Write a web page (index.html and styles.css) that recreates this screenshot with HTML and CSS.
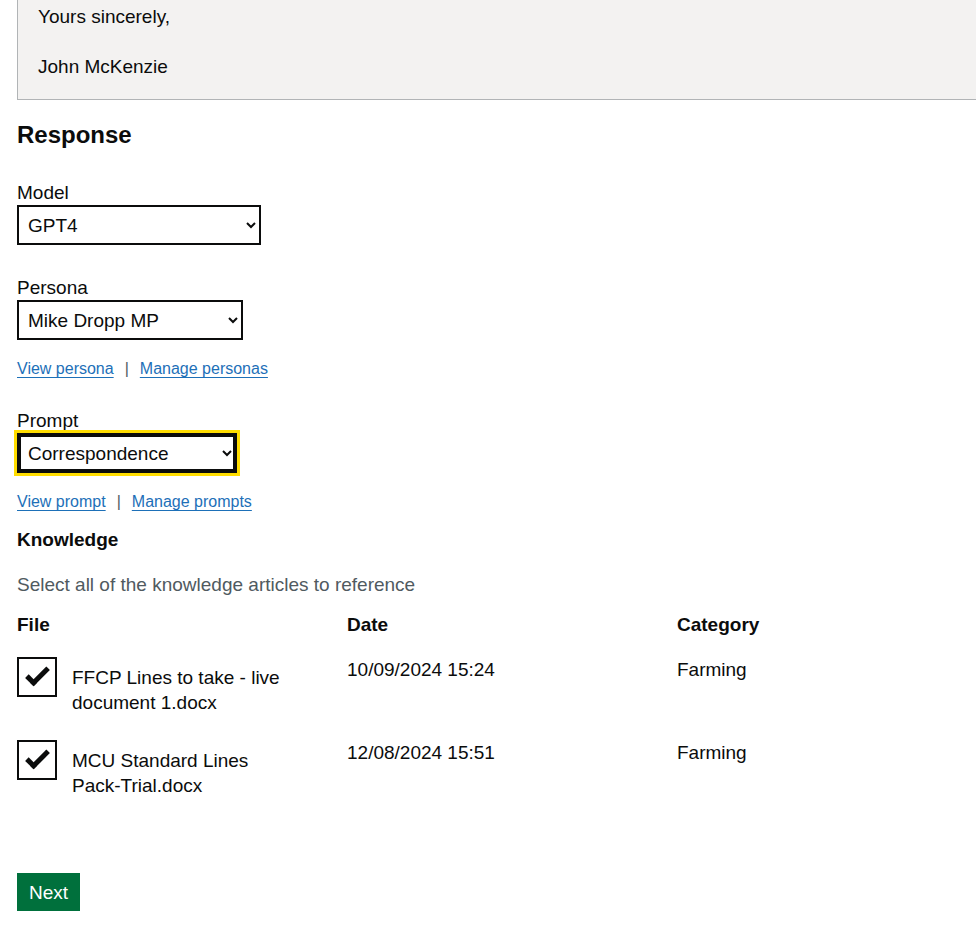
FILE: index.html
```html
<!DOCTYPE html>
<html lang="en">
<head>
<meta charset="utf-8">
<title>Response</title>
<link rel="stylesheet" href="styles.css">
</head>
<body>
<main class="page">
  <div class="letter">
    <p class="letter-line">Yours sincerely,</p>
    <p class="letter-line last">John McKenzie</p>
  </div>

  <h2 class="heading-m">Response</h2>

  <div class="form-group">
    <label class="label" for="model">Model</label>
    <select class="select model" id="model"><option>GPT4</option></select>
  </div>

  <div class="form-group tight">
    <label class="label" for="persona">Persona</label>
    <select class="select persona" id="persona"><option>Mike Dropp MP</option></select>
    <p class="links"><a href="#" class="link">View persona</a><span class="sep">|</span><a href="#" class="link">Manage personas</a></p>
  </div>

  <div class="form-group tight">
    <label class="label" for="prompt">Prompt</label>
    <select class="select prompt focused" id="prompt"><option>Correspondence</option></select>
    <p class="links"><a href="#" class="link">View prompt</a><span class="sep">|</span><a href="#" class="link">Manage prompts</a></p>
  </div>

  <h3 class="heading-s">Knowledge</h3>
  <p class="hint">Select all of the knowledge articles to reference</p>

  <table class="table">
    <thead>
      <tr><th class="th">File</th><th class="th">Date</th><th class="th">Category</th></tr>
    </thead>
    <tbody>
      <tr>
        <td class="td">
          <div class="checkbox">
            <span class="box"></span>
            <span class="cb-label">FFCP Lines to take - live document 1.docx</span>
          </div>
        </td>
        <td class="td">10/09/2024 15:24</td>
        <td class="td">Farming</td>
      </tr>
      <tr>
        <td class="td">
          <div class="checkbox">
            <span class="box"></span>
            <span class="cb-label">MCU Standard Lines Pack-Trial.docx</span>
          </div>
        </td>
        <td class="td">12/08/2024 15:51</td>
        <td class="td">Farming</td>
      </tr>
    </tbody>
  </table>

  <button class="button" type="button">Next</button>
</main>
</body>
</html>
```

FILE: styles.css
```css
html, body {
  margin: 0;
  padding: 0;
  overflow: hidden;
  background: #ffffff;
}
body {
  font-family: "Liberation Sans", Arial, sans-serif;
  color: #0b0c0c;
  font-size: 19px;
  line-height: 25px;
}
.page {
  margin-left: 17px;
  width: 990px;
}
.letter {
  background: #f3f2f1;
  border: 1px solid #b1b4b6;
  border-top: none;
  padding: 4px 20px 20px 20px;
}
.letter-line {
  margin: 0 0 25px 0;
}
.letter-line.last {
  margin-bottom: 0;
}
.heading-m {
  font-size: 24px;
  line-height: 30px;
  font-weight: 700;
  margin: 20px 0 30px 0;
}
.form-group {
  margin-bottom: 30px;
}
.form-group.tight {
  margin-bottom: 29px;
}
.label {
  display: block;
  margin: 0;
}
.select {
  display: block;
  box-sizing: border-box;
  height: 40px;
  font-family: "Liberation Sans", Arial, sans-serif;
  font-size: 19px;
  color: #0b0c0c;
  background-color: #ffffff;
  border: 2px solid #0b0c0c;
  border-radius: 0;
  padding: 0 4px 0 5px;
  margin: 0;
}
.model { width: 244px; }
.persona { width: 226px; }
.prompt { width: 220px; }
.focused {
  outline: 3px solid #ffdd00;
  outline-offset: 0;
  box-shadow: inset 0 0 0 2px #0b0c0c;
}
.links {
  margin: 19px 0 0 0;
  font-size: 16px;
  line-height: 20px;
}
.link {
  color: #1d70b8;
  text-decoration: underline;
  text-decoration-thickness: 1px;
  text-underline-offset: 0.16em;
}
.sep {
  color: #505a5f;
  margin: 0 11px;
}
.heading-s {
  font-size: 19px;
  line-height: 25px;
  font-weight: 700;
  margin: -14px 0 20px 0;
}
.hint {
  color: #505a5f;
  margin: 0 0 15px 0;
}
.table {
  width: 990px;
  border-collapse: collapse;
  border-spacing: 0;
  table-layout: fixed;
  margin-bottom: 60px;
}
.th {
  text-align: left;
  font-weight: 700;
  padding: 0 0 10px 0;
  vertical-align: top;
}
.td {
  text-align: left;
  padding: 10px 0;
  vertical-align: top;
}
.checkbox {
  display: flex;
  align-items: flex-start;
}
.box {
  position: relative;
  flex: 0 0 auto;
  box-sizing: border-box;
  width: 40px;
  height: 40px;
  border: 2px solid #0b0c0c;
  background: #ffffff;
}
.box::after {
  content: "";
  position: absolute;
  box-sizing: border-box;
  top: 9px;
  left: 7px;
  width: 23px;
  height: 12px;
  transform: rotate(-45deg);
  border: solid #0b0c0c;
  border-width: 0 0 5px 5px;
  border-top-color: transparent;
}
.cb-label {
  padding: 8px 15px 5px 15px;
  width: 230px;
}
.button {
  display: block;
  font-family: "Liberation Sans", Arial, sans-serif;
  font-size: 19px;
  line-height: 19px;
  color: #ffffff;
  background: #00703c;
  border: 2px solid transparent;
  border-radius: 0;
  box-shadow: 0 2px 0 #002d18;
  padding: 8px 10px 7px 10px;
  margin: 0;
  cursor: pointer;
}
```
